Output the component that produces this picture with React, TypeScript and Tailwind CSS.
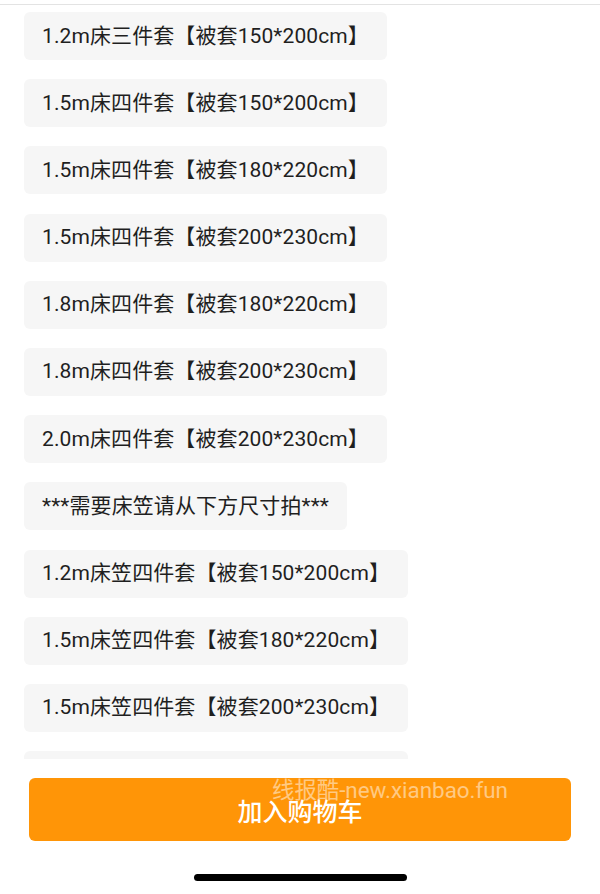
const options = [
  "1.2m床三件套【被套150*200cm】",
  "1.5m床四件套【被套150*200cm】",
  "1.5m床四件套【被套180*220cm】",
  "1.5m床四件套【被套200*230cm】",
  "1.8m床四件套【被套180*220cm】",
  "1.8m床四件套【被套200*230cm】",
  "2.0m床四件套【被套200*230cm】",
  "***需要床笠请从下方尺寸拍***",
  "1.2m床笠四件套【被套150*200cm】",
  "1.5m床笠四件套【被套180*220cm】",
  "1.5m床笠四件套【被套200*230cm】",
  "1.8m床笠四件套【被套180*220cm】",
];

export default function App() {
  return (
    <div className="flex h-[894px] w-[600px] flex-col bg-white font-['Roboto','Noto_Sans_CJK_SC',sans-serif] text-[#1f1f1f]">
      <div className="mt-[4px] h-px w-full bg-[#e3e3e3]" />

      {/* SKU options */}
      <div className="h-[754px] overflow-hidden px-[24px] pt-[7px]">
        <div className="flex flex-col items-start gap-[19.2px]">
          {options.map((label) => (
            <div
              key={label}
              className="flex h-[48px] shrink-0 items-center rounded-[6px] bg-[#f6f6f6] px-[18px] text-[21px] leading-none tracking-[0.1px]"
            >
              {label}
            </div>
          ))}
        </div>
      </div>

      {/* Add to cart */}
      <div className="px-[29px] pt-[19px]">
        <button className="relative flex h-[63px] w-full items-center justify-center rounded-[6px] bg-[#ff9507] text-white">
          <span className="mt-[1px] font-['Noto_Sans_CJK_SC',sans-serif] text-[25px] font-medium leading-none">加入购物车</span>
          <span className="absolute left-[243px] top-[-2px] font-['Roboto','Noto_Sans_CJK_SC',sans-serif] text-[22.4px] font-normal leading-[28px] text-white/50">
            线报酷-new.xianbao.fun
          </span>
        </button>
      </div>

      <div className="mt-auto flex justify-center pb-[13px]">
        <div className="h-[7px] w-[213px] rounded-full bg-black" />
      </div>
    </div>
  );
}
